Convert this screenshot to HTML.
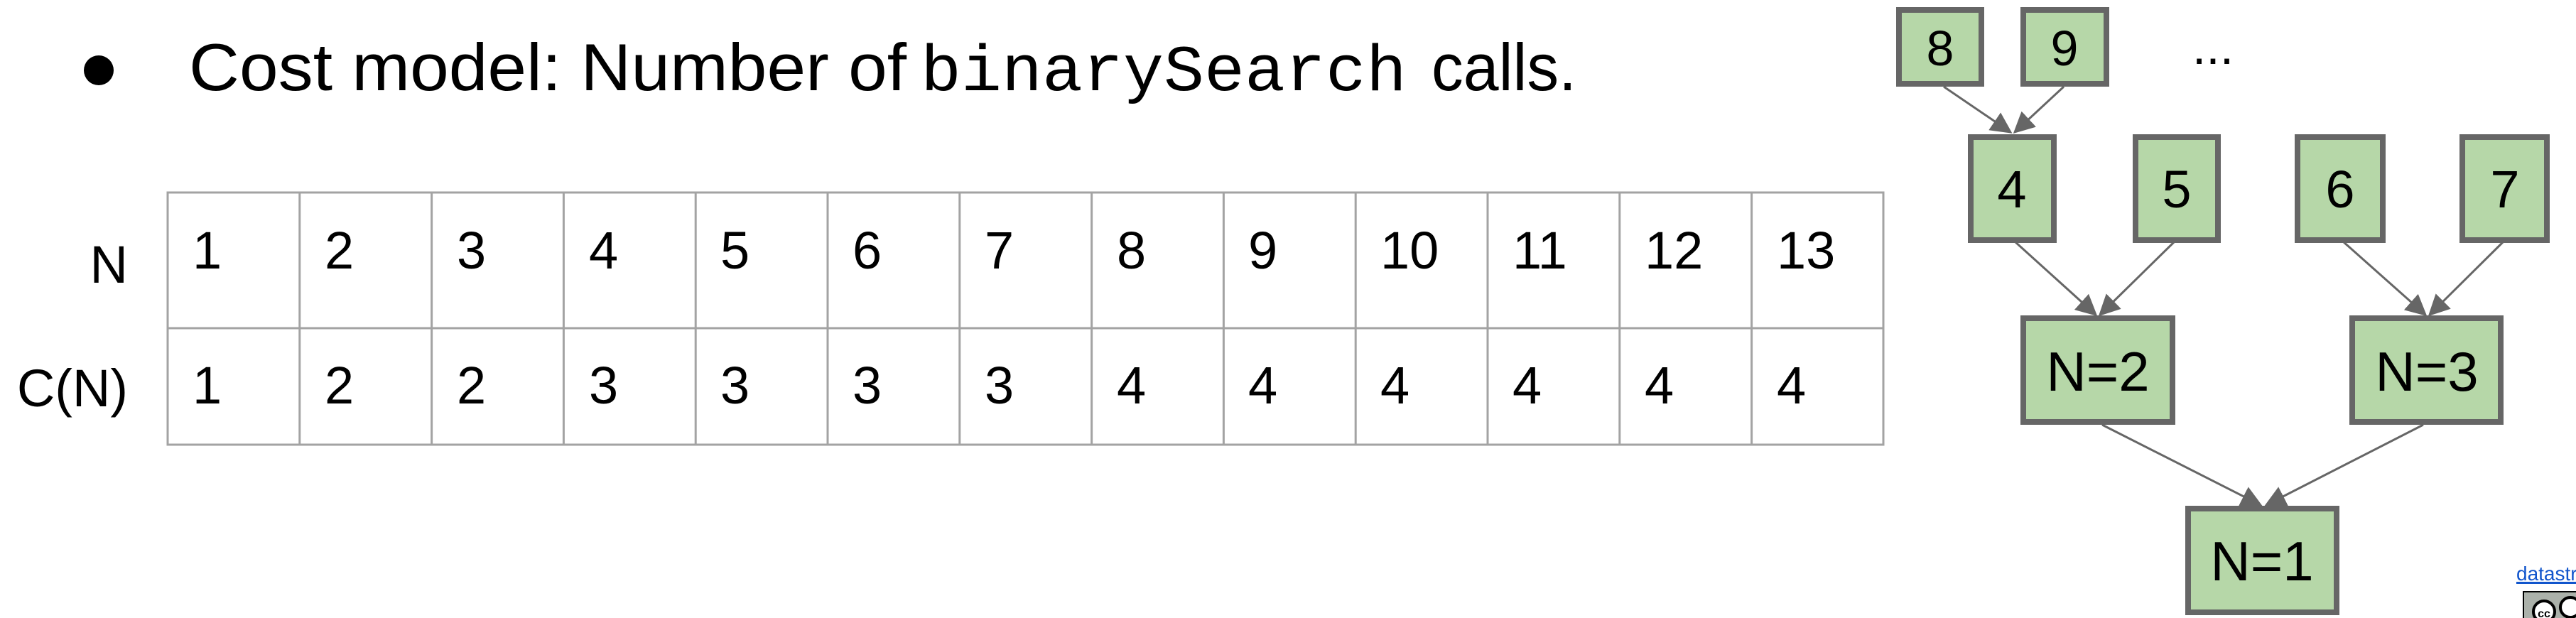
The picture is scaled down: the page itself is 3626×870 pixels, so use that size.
<!DOCTYPE html>
<html><head><meta charset="utf-8"><style>
html,body{margin:0;padding:0;background:#fff;width:3626px;height:870px;overflow:hidden}
svg{display:block}
</style></head><body>
<svg width="3626" height="870" viewBox="0 0 3626 870" xmlns="http://www.w3.org/2000/svg">
<circle cx="139" cy="99" r="21" fill="#000"/>
<text x="266" y="127" font-family="Liberation Sans, sans-serif" font-size="94" textLength="1010" lengthAdjust="spacingAndGlyphs">Cost model: Number of</text>
<text x="1296" y="127" font-family="Liberation Mono, monospace" font-size="92" textLength="684" lengthAdjust="spacingAndGlyphs">binarySearch</text>
<text x="2015" y="127" font-family="Liberation Sans, sans-serif" font-size="94" textLength="204" lengthAdjust="spacingAndGlyphs">calls.</text>

<g stroke="#a3a3a3" stroke-width="3" fill="none">
<rect x="236" y="271" width="2415" height="355"/>
<line x1="236" y1="462" x2="2651" y2="462"/>
<path d="M421.8 271V626M607.6 271V626M793.4 271V626M979.2 271V626M1165 271V626M1350.8 271V626M1536.6 271V626M1722.4 271V626M1908.2 271V626M2094 271V626M2279.8 271V626M2465.6 271V626"/>
</g>
<g font-family="Liberation Sans, Arial, sans-serif" font-size="74" fill="#000">
<text x="180" y="398" text-anchor="end">N</text>
<text x="180" y="572" text-anchor="end">C(N)</text>
<text y="378">
<tspan x="271">1</tspan><tspan x="457">2</tspan><tspan x="643">3</tspan><tspan x="829">4</tspan><tspan x="1014">5</tspan><tspan x="1200">6</tspan><tspan x="1386">7</tspan><tspan x="1572">8</tspan><tspan x="1757">9</tspan><tspan x="1943">10</tspan><tspan x="2129">11</tspan><tspan x="2315">12</tspan><tspan x="2501">13</tspan>
</text>
<text y="568">
<tspan x="271">1</tspan><tspan x="457">2</tspan><tspan x="643">2</tspan><tspan x="829">3</tspan><tspan x="1014">3</tspan><tspan x="1200">3</tspan><tspan x="1386">3</tspan><tspan x="1572">4</tspan><tspan x="1757">4</tspan><tspan x="1943">4</tspan><tspan x="2129">4</tspan><tspan x="2315">4</tspan><tspan x="2501">4</tspan>
</text>
</g>

<defs>
<marker id="ah" markerWidth="10" markerHeight="10" refX="9" refY="5" orient="auto" markerUnits="strokeWidth">
<path d="M0,0 L10,5 L0,10 z" fill="#666"/>
</marker>
</defs>
<g stroke="#666" stroke-width="3" marker-end="url(#ah)">
<line x1="2736" y1="122" x2="2830" y2="186"/>
<line x1="2905" y1="122" x2="2836" y2="186"/>
<line x1="2836" y1="340" x2="2950" y2="443"/>
<line x1="3061" y1="340" x2="2956" y2="443"/>
<line x1="3298" y1="340" x2="3414" y2="443"/>
<line x1="3524" y1="340" x2="3420" y2="443"/>
<line x1="2959" y1="598" x2="3182" y2="711"/>
<line x1="3411" y1="598" x2="3190" y2="711"/>
</g>
<g fill="#b6d7a8" stroke="#666" stroke-width="8">
<rect x="2673" y="14" width="116" height="104"/>
<rect x="2848" y="14" width="117" height="104"/>
<rect x="2774" y="193" width="117" height="145"/>
<rect x="3006" y="193" width="116" height="145"/>
<rect x="3234" y="193" width="120" height="145"/>
<rect x="3466" y="193" width="119" height="145"/>
<rect x="2848" y="448" width="210" height="146"/>
<rect x="3311" y="448" width="209" height="146"/>
<rect x="3080" y="716" width="209" height="146"/>
</g>
<g font-family="Liberation Sans, Arial, sans-serif" fill="#000" text-anchor="middle">
<text x="2731" y="92" font-size="70">8</text>
<text x="2906" y="92" font-size="70">9</text>
<text x="3115" y="90" font-size="70">...</text>
<text x="2832" y="292" font-size="74">4</text>
<text x="3064" y="292" font-size="74">5</text>
<text x="3294" y="292" font-size="74">6</text>
<text x="3526" y="292" font-size="74">7</text>
<text x="2953" y="550" font-size="78">N=2</text>
<text x="3416" y="550" font-size="78">N=3</text>
<text x="3184" y="817" font-size="78">N=1</text>
</g>
<text x="3542" y="817" font-family="Liberation Sans, sans-serif" font-size="28" fill="#1155cc" text-decoration="underline">datastructur.es</text>
<line x1="3542" y1="821" x2="3626" y2="821" stroke="#1155cc" stroke-width="2"/>
<rect x="3552" y="833" width="90" height="45" fill="#abb1aa" stroke="#000" stroke-width="2"/>
<circle cx="3581" cy="861" r="15" fill="#fff" stroke="#000" stroke-width="4"/>
<text x="3581" y="869" font-family="Liberation Sans, sans-serif" font-weight="bold" font-size="16" text-anchor="middle">cc</text>
<circle cx="3618" cy="855" r="14" fill="#fff" stroke="#000" stroke-width="4"/>
</svg>
</body></html>
